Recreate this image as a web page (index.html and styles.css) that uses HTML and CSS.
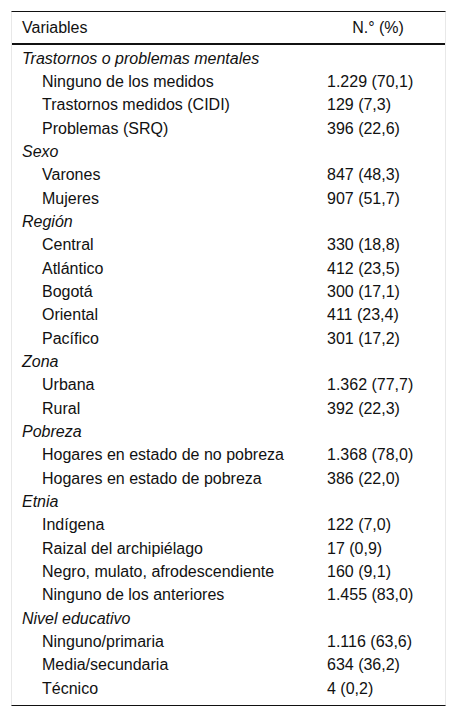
FILE: index.html
```html
<!DOCTYPE html>
<html lang="es">
<head>
<meta charset="utf-8">
<link rel="stylesheet" href="styles.css">
</head>
<body>
<div class="table">
  <div class="head">
    <div class="c1">Variables</div>
    <div class="c2h">N.° (%)</div>
  </div>
  <div class="body">
    <div class="row cat"><div class="c1">Trastornos o problemas mentales</div></div>
    <div class="row"><div class="c1 sub">Ninguno de los medidos</div><div class="c2">1.229 (70,1)</div></div>
    <div class="row"><div class="c1 sub">Trastornos medidos (CIDI)</div><div class="c2">129 (7,3)</div></div>
    <div class="row"><div class="c1 sub">Problemas (SRQ)</div><div class="c2">396 (22,6)</div></div>
    <div class="row cat"><div class="c1">Sexo</div></div>
    <div class="row"><div class="c1 sub">Varones</div><div class="c2">847 (48,3)</div></div>
    <div class="row"><div class="c1 sub">Mujeres</div><div class="c2">907 (51,7)</div></div>
    <div class="row cat"><div class="c1">Región</div></div>
    <div class="row"><div class="c1 sub">Central</div><div class="c2">330 (18,8)</div></div>
    <div class="row"><div class="c1 sub">Atlántico</div><div class="c2">412 (23,5)</div></div>
    <div class="row"><div class="c1 sub">Bogotá</div><div class="c2">300 (17,1)</div></div>
    <div class="row"><div class="c1 sub">Oriental</div><div class="c2">411 (23,4)</div></div>
    <div class="row"><div class="c1 sub">Pacífico</div><div class="c2">301 (17,2)</div></div>
    <div class="row cat"><div class="c1">Zona</div></div>
    <div class="row"><div class="c1 sub">Urbana</div><div class="c2">1.362 (77,7)</div></div>
    <div class="row"><div class="c1 sub">Rural</div><div class="c2">392 (22,3)</div></div>
    <div class="row cat"><div class="c1">Pobreza</div></div>
    <div class="row"><div class="c1 sub">Hogares en estado de no pobreza</div><div class="c2">1.368 (78,0)</div></div>
    <div class="row"><div class="c1 sub">Hogares en estado de pobreza</div><div class="c2">386 (22,0)</div></div>
    <div class="row cat"><div class="c1">Etnia</div></div>
    <div class="row"><div class="c1 sub">Indígena</div><div class="c2">122 (7,0)</div></div>
    <div class="row"><div class="c1 sub">Raizal del archipiélago</div><div class="c2">17 (0,9)</div></div>
    <div class="row"><div class="c1 sub">Negro, mulato, afrodescendiente</div><div class="c2">160 (9,1)</div></div>
    <div class="row"><div class="c1 sub">Ninguno de los anteriores</div><div class="c2">1.455 (83,0)</div></div>
    <div class="row cat"><div class="c1">Nivel educativo</div></div>
    <div class="row"><div class="c1 sub">Ninguno/primaria</div><div class="c2">1.116 (63,6)</div></div>
    <div class="row"><div class="c1 sub">Media/secundaria</div><div class="c2">634 (36,2)</div></div>
    <div class="row"><div class="c1 sub">Técnico</div><div class="c2">4 (0,2)</div></div>
  </div>
</div>
</body>
</html>
```
FILE: styles.css
```css
html, body {
  margin: 0;
  padding: 0;
  background: #fff;
}
body {
  padding: 11px 10px 0 11px;
  font-family: "Liberation Sans", Arial, sans-serif;
  font-size: 16px;
  color: #111;
}
.table {
  width: 435px;
  box-sizing: border-box;
  border-top: 1px solid #111;
  border-bottom: 1px solid #111;
  border-left: 1px solid #e8e8e8;
  border-right: 1px solid #e8e8e8;
}
.head {
  display: grid;
  grid-template-columns: 288px 1fr;
  height: 31px;
  align-items: center;
  border-bottom: 2px solid #111;
}
.c2h {
  text-align: center;
  padding-left: 11px;
}
.body {
  padding: 1.5px 0 5px;
}
.row {
  display: grid;
  grid-template-columns: 288px 1fr;
  height: 23.35px;
  line-height: 23.35px;
  white-space: nowrap;
}
.c1 {
  padding-left: 10px;
}
.cat .c1 {
  font-style: italic;
}
.c1.sub {
  padding-left: 30px;
}
.c2 {
  padding-left: 27px;
}
```
